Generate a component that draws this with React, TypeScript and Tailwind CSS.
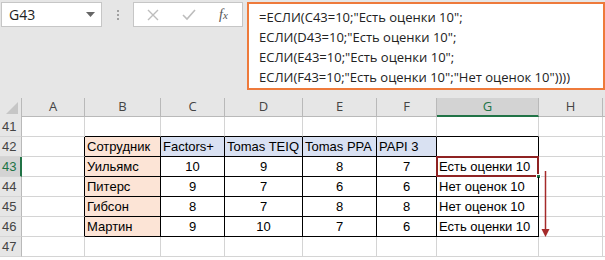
import React from "react";

const cols = ["A", "B", "C", "D", "E", "F", "G", "H"];
const widths = ["w-[63px]", "w-[76px]", "w-[64px]", "w-[78px]", "w-[74px]", "w-[60px]", "w-[102px]", "w-[64px]"];

const formula = [
  '=ЕСЛИ(C43=10;"Есть оценки 10";',
  'ЕСЛИ(D43=10;"Есть оценки 10";',
  'ЕСЛИ(E43=10;"Есть оценки 10";',
  'ЕСЛИ(F43=10;"Есть оценки 10";"Нет оценок 10"))))',
];

const table = [
  ["Уильямс", "10", "9", "8", "7", "Есть оценки 10"],
  ["Питерс", "9", "7", "6", "6", "Нет оценок 10"],
  ["Гибсон", "8", "7", "8", "8", "Нет оценок 10"],
  ["Мартин", "9", "10", "7", "6", "Есть оценки 10"],
];

const headerRow = ["Сотрудник", "Factors+", "Tomas TEIQ", "Tomas PPA", "PAPI 3", ""];

function RowHead({ n, active }: { n: number; active?: boolean }) {
  return (
    <div
      className={`flex h-[20px] w-[22px] shrink-0 items-center border-b border-[#d5d5d5] pl-[2px] text-[13px] ${
        active
          ? "border-r-2 border-r-[#217346] bg-[#d3d3d3] text-[#217346]"
          : "border-r border-r-[#b9b9b9] bg-[#e6e6e6] text-[#444]"
      }`}
    >
      {n}
    </div>
  );
}

function Cell({
  w,
  children,
  className = "",
}: {
  w: string;
  children?: React.ReactNode;
  className?: string;
}) {
  return (
    <div
      className={`flex h-[20px] shrink-0 items-center overflow-visible whitespace-nowrap border-b border-r text-[13px] leading-none text-black ${w} ${className}`}
    >
      {children}
    </div>
  );
}

function EmptyRow({ n, blackBottom }: { n: number; blackBottom?: boolean }) {
  return (
    <div className="flex">
      <RowHead n={n} />
      {widths.map((w, i) => (
        <Cell
          key={i}
          w={w}
          className={`border-r-[#d4d4d4] ${
            blackBottom && i >= 1 && i <= 6 ? "border-b-black" : "border-b-[#d4d4d4]"
          }`}
        />
      ))}
      <div className="h-[20px] flex-1 border-b border-[#d4d4d4]" />
    </div>
  );
}

export default function App() {
  return (
    <div
      className="relative h-[260px] w-[605px] overflow-hidden bg-white"
      style={{ fontFamily: '"Liberation Sans", Arial, sans-serif' }}
    >
      {/* formula bar */}
      <div className="flex h-[98px] items-start bg-[#e6e6e6] pl-[1px] pt-[2px]">
        <div className="flex h-[25px] w-[101px] items-center justify-between border border-[#c6c6c6] bg-white pl-[7px] pr-[6px] text-[14px] text-[#222]" style={{ fontFamily: '"Open Sans", sans-serif' }}>
          <span>G43</span>
          <svg width="9" height="5" viewBox="0 0 9 5">
            <path d="M0 0h9L4.5 5z" fill="#666" />
          </svg>
        </div>
        <div className="flex h-[25px] w-[31px] flex-col items-center justify-center gap-[2px]">
          <span className="h-[2px] w-[2px] bg-[#a0a0a0]" />
          <span className="h-[2px] w-[2px] bg-[#a0a0a0]" />
          <span className="h-[2px] w-[2px] bg-[#a0a0a0]" />
        </div>
        <div className="flex h-[25px] w-[110px] items-center border border-[#c6c6c6] bg-white">
          <svg className="ml-[13px]" width="12" height="12" viewBox="0 0 12 12">
            <path d="M1 1l10 10M11 1L1 11" stroke="#bdbdbd" strokeWidth="1.4" />
          </svg>
          <svg className="ml-[23px]" width="14" height="12" viewBox="0 0 14 12">
            <path d="M1 6l4 4 8-9" stroke="#bdbdbd" strokeWidth="1.6" fill="none" />
          </svg>
          <span
            className="ml-[23px] text-[14px] italic text-[#555]"
            style={{ fontFamily: '"Liberation Serif", serif' }}
          >
            f<span className="text-[11px]">x</span>
          </span>
        </div>
        <div
          className="ml-[4px] h-[88px] w-[358px] border-2 border-[#ee7a3b] bg-white pl-[10px] pt-[3px] text-[13px] leading-[20px] text-[#222]"
          style={{ fontFamily: '"Open Sans", sans-serif' }}
        >
          {formula.map((l) => (
            <div key={l} className="whitespace-pre">{l}</div>
          ))}
        </div>
      </div>

      {/* column headers */}
      <div className="flex h-[19px] bg-[#e6e6e6] text-[13px] text-[#444]" style={{ fontFamily: '"Open Sans", sans-serif' }}>
        <div className="relative w-[22px] shrink-0 border-r border-[#b9b9b9]">
          <svg className="absolute bottom-[3px] right-[3px]" width="12" height="12" viewBox="0 0 12 12">
            <path d="M12 0v12H0z" fill="#c6c6c6" />
          </svg>
        </div>
        {cols.map((c, i) => (
          <div
            key={c}
            className={`flex shrink-0 items-center justify-center border-r ${widths[i]} ${
              c === "G"
                ? "border-b-2 border-r-[#b9b9b9] border-b-[#217346] bg-[#d3d3d3] text-[#217346]"
                : "border-b border-[#b9b9b9]"
            }`}
          >
            {c}
          </div>
        ))}
        <div className="flex-1 border-b border-[#b9b9b9]" />
      </div>

      <EmptyRow n={41} blackBottom />

      {/* row 42 header row */}
      <div className="flex">
        <RowHead n={42} />
        <Cell w={widths[0]} className="border-b-[#d4d4d4] border-r-black" />
        {headerRow.map((t, i) => (
          <Cell
            key={i}
            w={widths[i + 1]}
            className={`border-black pl-[2px] ${
              i === 0 ? "bg-[#fce4d6]" : i === 5 ? "bg-white" : "bg-[#d9e1f2]"
            }`}
          >
            {t}
          </Cell>
        ))}
        <Cell w={widths[7]} className="border-[#d4d4d4]" />
        <div className="h-[20px] flex-1 border-b border-[#d4d4d4]" />
      </div>

      {table.map((r, ri) => (
        <div key={ri} className="flex">
          <RowHead n={43 + ri} active={ri === 0} />
          <Cell w={widths[0]} className="border-b-[#d4d4d4] border-r-black" />
          {r.map((t, i) => (
            <Cell
              key={i}
              w={widths[i + 1]}
              className={`relative border-black ${
                i === 0
                  ? "bg-[#fce4d6] pl-[2px]"
                  : i === 5
                  ? "pl-[2px]"
                  : "justify-center"
              }`}
            >
              {t}
              {ri === 0 && i === 5 && (
                <>
                  <div className="absolute inset-[-1px] border-2 border-[#8f2323]" />
                  <div className="absolute bottom-[-3px] right-[-3px] h-[5px] w-[5px] border border-white bg-[#217346]" />
                </>
              )}
            </Cell>
          ))}
          <Cell w={widths[7]} className="border-[#d4d4d4]" />
          <div className="h-[20px] flex-1 border-b border-[#d4d4d4]" />
        </div>
      ))}

      <EmptyRow n={47} />

      {/* arrow */}
      <svg className="absolute left-[541px] top-[171px]" width="9" height="67" viewBox="0 0 9 67">
        <path d="M4.5 0v63" stroke="#a52a2a" strokeWidth="1.5" />
        <path d="M0.5 58l4 8 4-8z" fill="#a52a2a" />
      </svg>
    </div>
  );
}
